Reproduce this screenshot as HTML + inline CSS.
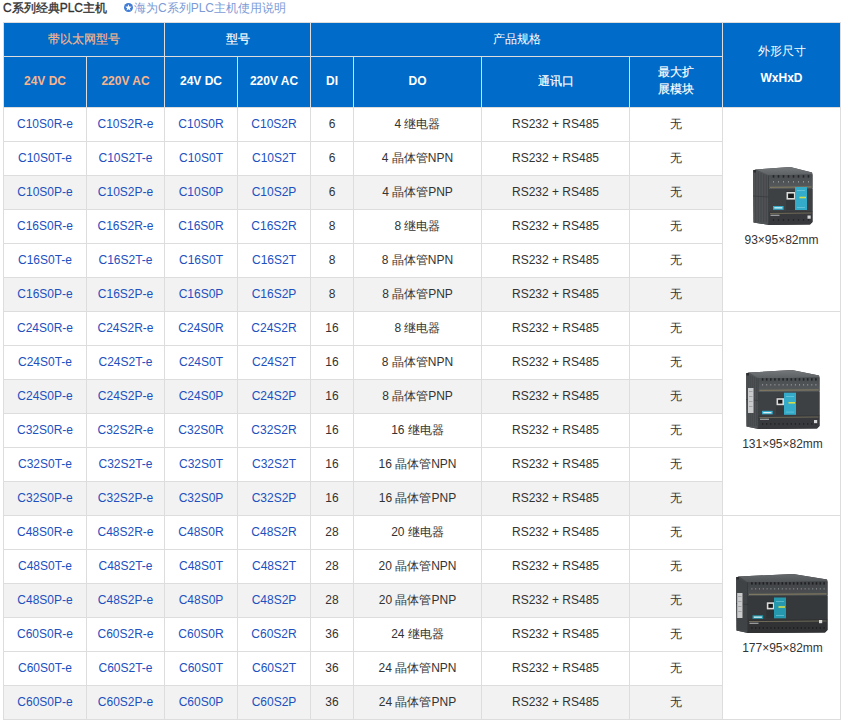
<!DOCTYPE html>
<html><head><meta charset="utf-8"><style>
html,body{margin:0;padding:0;background:#fff;}
body{width:845px;height:724px;position:relative;overflow:hidden;font-family:"Liberation Sans",sans-serif;font-size:12px;color:#333;}
.c{position:absolute;display:flex;align-items:center;justify-content:center;text-align:center;box-sizing:border-box;}
.hl{position:absolute;height:1px;background:#dddddd;}
.vl{position:absolute;width:1px;background:#dddddd;}
.bg{position:absolute;}
.b{font-weight:bold;}
.cb{font-weight:normal;-webkit-text-stroke:0.2px currentColor;}
.m{color:#2050c0;}
.t{color:#333;}
.or{color:#f6b58e;}
.w{color:#fff;}
</style></head><body>

<div style="position:absolute;left:3px;top:0px;height:16px;line-height:16px;font-size:12px;font-weight:normal;-webkit-text-stroke:0.35px #333;color:#333;white-space:nowrap">C系列经典PLC主机</div>
<svg style="position:absolute;left:124px;top:3px" width="9" height="9" viewBox="0 0 9 9"><circle cx="4.5" cy="4.5" r="4.5" fill="#3f7cd6"/><polygon points="4.50,1.30 5.35,3.53 7.73,3.65 5.88,5.15 6.50,7.45 4.50,6.15 2.50,7.45 3.12,5.15 1.27,3.65 3.65,3.53" fill="#fff"/></svg>
<div style="position:absolute;left:134px;top:0px;height:16px;line-height:16px;font-size:12px;color:#7c9bd6;white-space:nowrap">海为C系列PLC主机使用说明</div>
<div class="bg" style="left:3px;top:22px;width:838px;height:85px;background:#006bc8"></div>
<div class="bg" style="left:3px;top:175px;width:719px;height:34px;background:#f2f2f2"></div>
<div class="bg" style="left:3px;top:277px;width:719px;height:34px;background:#f2f2f2"></div>
<div class="bg" style="left:3px;top:379px;width:719px;height:34px;background:#f2f2f2"></div>
<div class="bg" style="left:3px;top:481px;width:719px;height:34px;background:#f2f2f2"></div>
<div class="bg" style="left:3px;top:583px;width:719px;height:34px;background:#f2f2f2"></div>
<div class="bg" style="left:3px;top:685px;width:719px;height:34px;background:#f2f2f2"></div>
<div class="c cb or" style="left:4px;top:23px;width:160px;height:33px">带以太网型号</div>
<div class="c cb w" style="left:165px;top:23px;width:145px;height:33px">型号</div>
<div class="c w" style="left:311px;top:23px;width:411px;height:33px">产品规格</div>
<div class="c w" style="left:723px;top:22px;width:117px;height:84px"><div style="line-height:26px">外形尺寸<br><b style="position:relative;top:1px">WxHxD</b></div></div>
<div class="c b or" style="left:4px;top:56px;width:82px;height:50px">24V DC</div>
<div class="c b or" style="left:87px;top:56px;width:77px;height:50px">220V AC</div>
<div class="c b w" style="left:165px;top:56px;width:72px;height:50px">24V DC</div>
<div class="c b w" style="left:238px;top:56px;width:72px;height:50px">220V AC</div>
<div class="c b w" style="left:311px;top:56px;width:42px;height:50px">DI</div>
<div class="c b w" style="left:354px;top:56px;width:127px;height:50px">DO</div>
<div class="c cb w" style="left:482px;top:56px;width:147px;height:50px">通讯口</div>
<div class="c cb w" style="left:630px;top:56px;width:92px;height:50px"><div style="line-height:17px">最大扩<br>展模块</div></div>
<div class="c m" style="left:4px;top:107px;width:82px;height:33px">C10S0R-e</div>
<div class="c m" style="left:87px;top:107px;width:77px;height:33px">C10S2R-e</div>
<div class="c m" style="left:165px;top:107px;width:72px;height:33px">C10S0R</div>
<div class="c m" style="left:238px;top:107px;width:72px;height:33px">C10S2R</div>
<div class="c t" style="left:311px;top:107px;width:42px;height:33px">6</div>
<div class="c t" style="left:354px;top:108px;width:127px;height:33px">4 继电器</div>
<div class="c t" style="left:482px;top:107px;width:147px;height:33px">RS232 + RS485</div>
<div class="c t" style="left:630px;top:108px;width:92px;height:33px">无</div>
<div class="c m" style="left:4px;top:141px;width:82px;height:33px">C10S0T-e</div>
<div class="c m" style="left:87px;top:141px;width:77px;height:33px">C10S2T-e</div>
<div class="c m" style="left:165px;top:141px;width:72px;height:33px">C10S0T</div>
<div class="c m" style="left:238px;top:141px;width:72px;height:33px">C10S2T</div>
<div class="c t" style="left:311px;top:141px;width:42px;height:33px">6</div>
<div class="c t" style="left:354px;top:142px;width:127px;height:33px">4 晶体管NPN</div>
<div class="c t" style="left:482px;top:141px;width:147px;height:33px">RS232 + RS485</div>
<div class="c t" style="left:630px;top:142px;width:92px;height:33px">无</div>
<div class="c m" style="left:4px;top:175px;width:82px;height:33px">C10S0P-e</div>
<div class="c m" style="left:87px;top:175px;width:77px;height:33px">C10S2P-e</div>
<div class="c m" style="left:165px;top:175px;width:72px;height:33px">C10S0P</div>
<div class="c m" style="left:238px;top:175px;width:72px;height:33px">C10S2P</div>
<div class="c t" style="left:311px;top:175px;width:42px;height:33px">6</div>
<div class="c t" style="left:354px;top:176px;width:127px;height:33px">4 晶体管PNP</div>
<div class="c t" style="left:482px;top:175px;width:147px;height:33px">RS232 + RS485</div>
<div class="c t" style="left:630px;top:176px;width:92px;height:33px">无</div>
<div class="c m" style="left:4px;top:209px;width:82px;height:33px">C16S0R-e</div>
<div class="c m" style="left:87px;top:209px;width:77px;height:33px">C16S2R-e</div>
<div class="c m" style="left:165px;top:209px;width:72px;height:33px">C16S0R</div>
<div class="c m" style="left:238px;top:209px;width:72px;height:33px">C16S2R</div>
<div class="c t" style="left:311px;top:209px;width:42px;height:33px">8</div>
<div class="c t" style="left:354px;top:210px;width:127px;height:33px">8 继电器</div>
<div class="c t" style="left:482px;top:209px;width:147px;height:33px">RS232 + RS485</div>
<div class="c t" style="left:630px;top:210px;width:92px;height:33px">无</div>
<div class="c m" style="left:4px;top:243px;width:82px;height:33px">C16S0T-e</div>
<div class="c m" style="left:87px;top:243px;width:77px;height:33px">C16S2T-e</div>
<div class="c m" style="left:165px;top:243px;width:72px;height:33px">C16S0T</div>
<div class="c m" style="left:238px;top:243px;width:72px;height:33px">C16S2T</div>
<div class="c t" style="left:311px;top:243px;width:42px;height:33px">8</div>
<div class="c t" style="left:354px;top:244px;width:127px;height:33px">8 晶体管NPN</div>
<div class="c t" style="left:482px;top:243px;width:147px;height:33px">RS232 + RS485</div>
<div class="c t" style="left:630px;top:244px;width:92px;height:33px">无</div>
<div class="c m" style="left:4px;top:277px;width:82px;height:33px">C16S0P-e</div>
<div class="c m" style="left:87px;top:277px;width:77px;height:33px">C16S2P-e</div>
<div class="c m" style="left:165px;top:277px;width:72px;height:33px">C16S0P</div>
<div class="c m" style="left:238px;top:277px;width:72px;height:33px">C16S2P</div>
<div class="c t" style="left:311px;top:277px;width:42px;height:33px">8</div>
<div class="c t" style="left:354px;top:278px;width:127px;height:33px">8 晶体管PNP</div>
<div class="c t" style="left:482px;top:277px;width:147px;height:33px">RS232 + RS485</div>
<div class="c t" style="left:630px;top:278px;width:92px;height:33px">无</div>
<div class="c m" style="left:4px;top:311px;width:82px;height:33px">C24S0R-e</div>
<div class="c m" style="left:87px;top:311px;width:77px;height:33px">C24S2R-e</div>
<div class="c m" style="left:165px;top:311px;width:72px;height:33px">C24S0R</div>
<div class="c m" style="left:238px;top:311px;width:72px;height:33px">C24S2R</div>
<div class="c t" style="left:311px;top:311px;width:42px;height:33px">16</div>
<div class="c t" style="left:354px;top:312px;width:127px;height:33px">8 继电器</div>
<div class="c t" style="left:482px;top:311px;width:147px;height:33px">RS232 + RS485</div>
<div class="c t" style="left:630px;top:312px;width:92px;height:33px">无</div>
<div class="c m" style="left:4px;top:345px;width:82px;height:33px">C24S0T-e</div>
<div class="c m" style="left:87px;top:345px;width:77px;height:33px">C24S2T-e</div>
<div class="c m" style="left:165px;top:345px;width:72px;height:33px">C24S0T</div>
<div class="c m" style="left:238px;top:345px;width:72px;height:33px">C24S2T</div>
<div class="c t" style="left:311px;top:345px;width:42px;height:33px">16</div>
<div class="c t" style="left:354px;top:346px;width:127px;height:33px">8 晶体管NPN</div>
<div class="c t" style="left:482px;top:345px;width:147px;height:33px">RS232 + RS485</div>
<div class="c t" style="left:630px;top:346px;width:92px;height:33px">无</div>
<div class="c m" style="left:4px;top:379px;width:82px;height:33px">C24S0P-e</div>
<div class="c m" style="left:87px;top:379px;width:77px;height:33px">C24S2P-e</div>
<div class="c m" style="left:165px;top:379px;width:72px;height:33px">C24S0P</div>
<div class="c m" style="left:238px;top:379px;width:72px;height:33px">C24S2P</div>
<div class="c t" style="left:311px;top:379px;width:42px;height:33px">16</div>
<div class="c t" style="left:354px;top:380px;width:127px;height:33px">8 晶体管PNP</div>
<div class="c t" style="left:482px;top:379px;width:147px;height:33px">RS232 + RS485</div>
<div class="c t" style="left:630px;top:380px;width:92px;height:33px">无</div>
<div class="c m" style="left:4px;top:413px;width:82px;height:33px">C32S0R-e</div>
<div class="c m" style="left:87px;top:413px;width:77px;height:33px">C32S2R-e</div>
<div class="c m" style="left:165px;top:413px;width:72px;height:33px">C32S0R</div>
<div class="c m" style="left:238px;top:413px;width:72px;height:33px">C32S2R</div>
<div class="c t" style="left:311px;top:413px;width:42px;height:33px">16</div>
<div class="c t" style="left:354px;top:414px;width:127px;height:33px">16 继电器</div>
<div class="c t" style="left:482px;top:413px;width:147px;height:33px">RS232 + RS485</div>
<div class="c t" style="left:630px;top:414px;width:92px;height:33px">无</div>
<div class="c m" style="left:4px;top:447px;width:82px;height:33px">C32S0T-e</div>
<div class="c m" style="left:87px;top:447px;width:77px;height:33px">C32S2T-e</div>
<div class="c m" style="left:165px;top:447px;width:72px;height:33px">C32S0T</div>
<div class="c m" style="left:238px;top:447px;width:72px;height:33px">C32S2T</div>
<div class="c t" style="left:311px;top:447px;width:42px;height:33px">16</div>
<div class="c t" style="left:354px;top:448px;width:127px;height:33px">16 晶体管NPN</div>
<div class="c t" style="left:482px;top:447px;width:147px;height:33px">RS232 + RS485</div>
<div class="c t" style="left:630px;top:448px;width:92px;height:33px">无</div>
<div class="c m" style="left:4px;top:481px;width:82px;height:33px">C32S0P-e</div>
<div class="c m" style="left:87px;top:481px;width:77px;height:33px">C32S2P-e</div>
<div class="c m" style="left:165px;top:481px;width:72px;height:33px">C32S0P</div>
<div class="c m" style="left:238px;top:481px;width:72px;height:33px">C32S2P</div>
<div class="c t" style="left:311px;top:481px;width:42px;height:33px">16</div>
<div class="c t" style="left:354px;top:482px;width:127px;height:33px">16 晶体管PNP</div>
<div class="c t" style="left:482px;top:481px;width:147px;height:33px">RS232 + RS485</div>
<div class="c t" style="left:630px;top:482px;width:92px;height:33px">无</div>
<div class="c m" style="left:4px;top:515px;width:82px;height:33px">C48S0R-e</div>
<div class="c m" style="left:87px;top:515px;width:77px;height:33px">C48S2R-e</div>
<div class="c m" style="left:165px;top:515px;width:72px;height:33px">C48S0R</div>
<div class="c m" style="left:238px;top:515px;width:72px;height:33px">C48S2R</div>
<div class="c t" style="left:311px;top:515px;width:42px;height:33px">28</div>
<div class="c t" style="left:354px;top:516px;width:127px;height:33px">20 继电器</div>
<div class="c t" style="left:482px;top:515px;width:147px;height:33px">RS232 + RS485</div>
<div class="c t" style="left:630px;top:516px;width:92px;height:33px">无</div>
<div class="c m" style="left:4px;top:549px;width:82px;height:33px">C48S0T-e</div>
<div class="c m" style="left:87px;top:549px;width:77px;height:33px">C48S2T-e</div>
<div class="c m" style="left:165px;top:549px;width:72px;height:33px">C48S0T</div>
<div class="c m" style="left:238px;top:549px;width:72px;height:33px">C48S2T</div>
<div class="c t" style="left:311px;top:549px;width:42px;height:33px">28</div>
<div class="c t" style="left:354px;top:550px;width:127px;height:33px">20 晶体管NPN</div>
<div class="c t" style="left:482px;top:549px;width:147px;height:33px">RS232 + RS485</div>
<div class="c t" style="left:630px;top:550px;width:92px;height:33px">无</div>
<div class="c m" style="left:4px;top:583px;width:82px;height:33px">C48S0P-e</div>
<div class="c m" style="left:87px;top:583px;width:77px;height:33px">C48S2P-e</div>
<div class="c m" style="left:165px;top:583px;width:72px;height:33px">C48S0P</div>
<div class="c m" style="left:238px;top:583px;width:72px;height:33px">C48S2P</div>
<div class="c t" style="left:311px;top:583px;width:42px;height:33px">28</div>
<div class="c t" style="left:354px;top:584px;width:127px;height:33px">20 晶体管PNP</div>
<div class="c t" style="left:482px;top:583px;width:147px;height:33px">RS232 + RS485</div>
<div class="c t" style="left:630px;top:584px;width:92px;height:33px">无</div>
<div class="c m" style="left:4px;top:617px;width:82px;height:33px">C60S0R-e</div>
<div class="c m" style="left:87px;top:617px;width:77px;height:33px">C60S2R-e</div>
<div class="c m" style="left:165px;top:617px;width:72px;height:33px">C60S0R</div>
<div class="c m" style="left:238px;top:617px;width:72px;height:33px">C60S2R</div>
<div class="c t" style="left:311px;top:617px;width:42px;height:33px">36</div>
<div class="c t" style="left:354px;top:618px;width:127px;height:33px">24 继电器</div>
<div class="c t" style="left:482px;top:617px;width:147px;height:33px">RS232 + RS485</div>
<div class="c t" style="left:630px;top:618px;width:92px;height:33px">无</div>
<div class="c m" style="left:4px;top:651px;width:82px;height:33px">C60S0T-e</div>
<div class="c m" style="left:87px;top:651px;width:77px;height:33px">C60S2T-e</div>
<div class="c m" style="left:165px;top:651px;width:72px;height:33px">C60S0T</div>
<div class="c m" style="left:238px;top:651px;width:72px;height:33px">C60S2T</div>
<div class="c t" style="left:311px;top:651px;width:42px;height:33px">36</div>
<div class="c t" style="left:354px;top:652px;width:127px;height:33px">24 晶体管NPN</div>
<div class="c t" style="left:482px;top:651px;width:147px;height:33px">RS232 + RS485</div>
<div class="c t" style="left:630px;top:652px;width:92px;height:33px">无</div>
<div class="c m" style="left:4px;top:685px;width:82px;height:33px">C60S0P-e</div>
<div class="c m" style="left:87px;top:685px;width:77px;height:33px">C60S2P-e</div>
<div class="c m" style="left:165px;top:685px;width:72px;height:33px">C60S0P</div>
<div class="c m" style="left:238px;top:685px;width:72px;height:33px">C60S2P</div>
<div class="c t" style="left:311px;top:685px;width:42px;height:33px">36</div>
<div class="c t" style="left:354px;top:686px;width:127px;height:33px">24 晶体管PNP</div>
<div class="c t" style="left:482px;top:685px;width:147px;height:33px">RS232 + RS485</div>
<div class="c t" style="left:630px;top:686px;width:92px;height:33px">无</div>
<svg style="position:absolute;left:753px;top:167px;overflow:visible" width="60" height="58" viewBox="0 0 60 58"><defs><filter id="bl1" x="-10%" y="-10%" width="120%" height="120%"><feGaussianBlur stdDeviation="0.8"/></filter><linearGradient id="gbl1" x1="0" y1="0" x2="0" y2="1"><stop offset="0" stop-color="#75787b"/><stop offset="1" stop-color="#5d6063"/></linearGradient><linearGradient id="ubl1" x1="0" y1="0" x2="0" y2="1"><stop offset="0" stop-color="#4a4d50"/><stop offset="1" stop-color="#575a5d"/></linearGradient></defs><g><path d="M0 3.5 L3 2.5 L37.2 0 L59 5.5 L59.5 8 L59.5 55 L57 57.5 L16 58 L0.5 55.5 Z" fill="#404346"/><path d="M0 3.5 L3 2.5 L16 8.0 L16 58 L0.5 55.5 Z" fill="#505356"/><line x1="2.7" y1="4.8" x2="2.7" y2="55" stroke="#3f4245" stroke-width="0.7"/><line x1="5.3" y1="5.6" x2="5.3" y2="55" stroke="#3f4245" stroke-width="0.7"/><line x1="8.0" y1="6.4" x2="8.0" y2="55" stroke="#3f4245" stroke-width="0.7"/><line x1="10.7" y1="7.2" x2="10.7" y2="55" stroke="#3f4245" stroke-width="0.7"/><line x1="13.3" y1="8.0" x2="13.3" y2="55" stroke="#3f4245" stroke-width="0.7"/><line x1="0" y1="29.0" x2="16" y2="30.0" stroke="#3a3c3f" stroke-width="0.8"/><line x1="15.7" y1="8.0" x2="15.7" y2="58" stroke="#35383b" stroke-width="0.8"/><rect x="0.5" y="3" width="2.5" height="2.5" fill="#2a2c2e"/><path d="M3 2.5 L37.2 0 L59 5.5 L59.5 7.5 L16 8.5 Z" fill="url(#gbl1)"/><path d="M16 8.5 L59.5 7.5 L59.5 21.5 L16 22.0 Z" fill="url(#ubl1)"/><rect x="19.7" y="8.2" width="1.6" height="2.4" fill="#222426"/><rect x="20.0" y="14.0" width="1.0" height="1.6" fill="#8d9093"/><rect x="24.7" y="8.2" width="1.6" height="2.4" fill="#222426"/><rect x="25.0" y="14.0" width="1.0" height="1.6" fill="#8d9093"/><rect x="29.7" y="8.2" width="1.6" height="2.4" fill="#222426"/><rect x="30.0" y="14.0" width="1.0" height="1.6" fill="#8d9093"/><rect x="34.7" y="8.2" width="1.6" height="2.4" fill="#222426"/><rect x="35.0" y="14.0" width="1.0" height="1.6" fill="#8d9093"/><rect x="39.7" y="8.2" width="1.6" height="2.4" fill="#222426"/><rect x="40.0" y="14.0" width="1.0" height="1.6" fill="#8d9093"/><rect x="44.7" y="8.2" width="1.6" height="2.4" fill="#222426"/><rect x="45.0" y="14.0" width="1.0" height="1.6" fill="#8d9093"/><rect x="49.7" y="8.2" width="1.6" height="2.4" fill="#222426"/><rect x="50.0" y="14.0" width="1.0" height="1.6" fill="#8d9093"/><rect x="54.7" y="8.2" width="1.6" height="2.4" fill="#222426"/><rect x="55.0" y="14.0" width="1.0" height="1.6" fill="#8d9093"/><path d="M17 19.8 L58.5 19.2 L58.5 20.4 L17 21.0 Z" fill="#7d775f"/><rect x="16" y="22.0" width="43.5" height="22.5" fill="#3e4144"/><rect x="33.0" y="24" width="9.5" height="19.0" fill="#36393c"/><rect x="33.5" y="25" width="9.0" height="7.600000000000001" fill="#dcdcda"/><rect x="35.1" y="26.6" width="5.8" height="4.4" fill="#1a1b1d"/><rect x="42" y="20" width="12" height="23" fill="#33abc9"/><rect x="46.5" y="29.7" width="6.5" height="1.6" fill="#d3dc4a"/><rect x="44" y="23.5" width="8.0" height="0.5" fill="#8fd6e6"/><rect x="44" y="40" width="8.0" height="0.5" fill="#8fd6e6"/><rect x="20" y="39" width="10.600000000000001" height="3.799999999999997" fill="#33abc9"/><rect x="21.3" y="40.2" width="8.0" height="1.3" fill="#d8f0f5"/><path d="M16 44.5 L59.5 44.0 L59.5 55 L57 57.5 L16 58 Z" fill="#37393c"/><path d="M17 46.0 L58.5 45.5 L58.5 46.5 L17 47.0 Z" fill="#6f6a57"/><rect x="17.5" y="47.7" width="9.0" height="1.2" fill="#a3a5a7"/><rect x="19.9" y="52.0" width="1.2" height="1.8" fill="#222426"/><rect x="24.9" y="52.0" width="1.2" height="1.8" fill="#222426"/><rect x="29.9" y="52.0" width="1.2" height="1.8" fill="#222426"/><rect x="34.9" y="52.0" width="1.2" height="1.8" fill="#222426"/><rect x="39.9" y="52.0" width="1.2" height="1.8" fill="#222426"/><rect x="44.9" y="52.0" width="1.2" height="1.8" fill="#222426"/><rect x="49.9" y="52.0" width="1.2" height="1.8" fill="#222426"/><rect x="54.9" y="52.0" width="1.2" height="1.8" fill="#222426"/><rect x="54.5" y="48.5" width="3.2" height="3.2" fill="#d8d8d8"/></g></svg>
<svg style="position:absolute;left:746px;top:370px;overflow:visible" width="74" height="59" viewBox="0 0 74 59"><defs><filter id="bl2" x="-10%" y="-10%" width="120%" height="120%"><feGaussianBlur stdDeviation="0.8"/></filter><linearGradient id="gbl2" x1="0" y1="0" x2="0" y2="1"><stop offset="0" stop-color="#75787b"/><stop offset="1" stop-color="#5d6063"/></linearGradient><linearGradient id="ubl2" x1="0" y1="0" x2="0" y2="1"><stop offset="0" stop-color="#4a4d50"/><stop offset="1" stop-color="#575a5d"/></linearGradient></defs><g><path d="M0 3.5 L3 2.5 L45.9 0 L73 5.5 L73.5 8 L73.5 56 L71 58.5 L12.5 59 L0.5 56.5 Z" fill="#404346"/><path d="M0 3.5 L3 2.5 L12.5 8.0 L12.5 59 L0.5 56.5 Z" fill="#505356"/><line x1="2.1" y1="4.8" x2="2.1" y2="56" stroke="#3f4245" stroke-width="0.7"/><line x1="4.2" y1="5.6" x2="4.2" y2="56" stroke="#3f4245" stroke-width="0.7"/><line x1="6.2" y1="6.4" x2="6.2" y2="56" stroke="#3f4245" stroke-width="0.7"/><line x1="8.3" y1="7.2" x2="8.3" y2="56" stroke="#3f4245" stroke-width="0.7"/><line x1="10.4" y1="8.0" x2="10.4" y2="56" stroke="#3f4245" stroke-width="0.7"/><line x1="0" y1="29.5" x2="12.5" y2="30.5" stroke="#3a3c3f" stroke-width="0.8"/><line x1="12.2" y1="8.0" x2="12.2" y2="59" stroke="#35383b" stroke-width="0.8"/><rect x="2" y="18" width="5.5" height="25" fill="#c9cbcd"/><rect x="3" y="21" width="3.5" height="0.8" fill="#9a9c9e"/><rect x="3" y="26" width="3.5" height="0.8" fill="#9a9c9e"/><rect x="3" y="31" width="3.5" height="0.8" fill="#9a9c9e"/><rect x="3" y="36" width="3.5" height="0.8" fill="#9a9c9e"/><rect x="0.5" y="3" width="2.5" height="2.5" fill="#2a2c2e"/><path d="M3 2.5 L45.9 0 L73 5.5 L73.5 7.5 L12.5 8.5 Z" fill="url(#gbl2)"/><path d="M12.5 8.5 L73.5 7.5 L73.5 21.5 L12.5 22.0 Z" fill="url(#ubl2)"/><rect x="15.8" y="8.2" width="1.6" height="2.4" fill="#222426"/><rect x="16.1" y="14.0" width="1.0" height="1.6" fill="#8d9093"/><rect x="19.9" y="8.2" width="1.6" height="2.4" fill="#222426"/><rect x="20.2" y="14.0" width="1.0" height="1.6" fill="#8d9093"/><rect x="24.0" y="8.2" width="1.6" height="2.4" fill="#222426"/><rect x="24.3" y="14.0" width="1.0" height="1.6" fill="#8d9093"/><rect x="28.1" y="8.2" width="1.6" height="2.4" fill="#222426"/><rect x="28.4" y="14.0" width="1.0" height="1.6" fill="#8d9093"/><rect x="32.2" y="8.2" width="1.6" height="2.4" fill="#222426"/><rect x="32.5" y="14.0" width="1.0" height="1.6" fill="#8d9093"/><rect x="36.3" y="8.2" width="1.6" height="2.4" fill="#222426"/><rect x="36.6" y="14.0" width="1.0" height="1.6" fill="#8d9093"/><rect x="40.4" y="8.2" width="1.6" height="2.4" fill="#222426"/><rect x="40.7" y="14.0" width="1.0" height="1.6" fill="#8d9093"/><rect x="44.5" y="8.2" width="1.6" height="2.4" fill="#222426"/><rect x="44.8" y="14.0" width="1.0" height="1.6" fill="#8d9093"/><rect x="48.6" y="8.2" width="1.6" height="2.4" fill="#222426"/><rect x="48.9" y="14.0" width="1.0" height="1.6" fill="#8d9093"/><rect x="52.7" y="8.2" width="1.6" height="2.4" fill="#222426"/><rect x="53.0" y="14.0" width="1.0" height="1.6" fill="#8d9093"/><rect x="56.8" y="8.2" width="1.6" height="2.4" fill="#222426"/><rect x="57.1" y="14.0" width="1.0" height="1.6" fill="#8d9093"/><rect x="60.9" y="8.2" width="1.6" height="2.4" fill="#222426"/><rect x="61.2" y="14.0" width="1.0" height="1.6" fill="#8d9093"/><rect x="65.0" y="8.2" width="1.6" height="2.4" fill="#222426"/><rect x="65.3" y="14.0" width="1.0" height="1.6" fill="#8d9093"/><rect x="69.1" y="8.2" width="1.6" height="2.4" fill="#222426"/><rect x="69.4" y="14.0" width="1.0" height="1.6" fill="#8d9093"/><path d="M13.5 19.8 L72.5 19.2 L72.5 20.4 L13.5 21.0 Z" fill="#7d775f"/><rect x="12.5" y="22.0" width="61.0" height="23.5" fill="#3e4144"/><rect x="30.0" y="27.2" width="8.0" height="17.6" fill="#36393c"/><rect x="30.5" y="28.2" width="7.5" height="7.0000000000000036" fill="#dcdcda"/><rect x="32.1" y="29.8" width="4.3" height="3.8" fill="#1a1b1d"/><rect x="38" y="22.7" width="12" height="22.099999999999998" fill="#33abc9"/><rect x="42.5" y="32.0" width="6.5" height="1.6" fill="#d3dc4a"/><rect x="40" y="26.2" width="8.0" height="0.5" fill="#8fd6e6"/><rect x="40" y="41.8" width="8.0" height="0.5" fill="#8fd6e6"/><rect x="16" y="40.8" width="10.7" height="3.5" fill="#33abc9"/><rect x="17.3" y="42.0" width="8.1" height="1.3" fill="#d8f0f5"/><path d="M12.5 45.5 L73.5 45.0 L73.5 56 L71 58.5 L12.5 59 Z" fill="#37393c"/><path d="M13.5 47.0 L72.5 46.5 L72.5 47.5 L13.5 48.0 Z" fill="#6f6a57"/><rect x="14.0" y="48.7" width="9.0" height="1.2" fill="#a3a5a7"/><rect x="16.0" y="53.0" width="1.2" height="1.8" fill="#222426"/><rect x="20.1" y="53.0" width="1.2" height="1.8" fill="#222426"/><rect x="24.2" y="53.0" width="1.2" height="1.8" fill="#222426"/><rect x="28.3" y="53.0" width="1.2" height="1.8" fill="#222426"/><rect x="32.4" y="53.0" width="1.2" height="1.8" fill="#222426"/><rect x="36.5" y="53.0" width="1.2" height="1.8" fill="#222426"/><rect x="40.6" y="53.0" width="1.2" height="1.8" fill="#222426"/><rect x="44.7" y="53.0" width="1.2" height="1.8" fill="#222426"/><rect x="48.8" y="53.0" width="1.2" height="1.8" fill="#222426"/><rect x="52.9" y="53.0" width="1.2" height="1.8" fill="#222426"/><rect x="57.0" y="53.0" width="1.2" height="1.8" fill="#222426"/><rect x="61.1" y="53.0" width="1.2" height="1.8" fill="#222426"/><rect x="65.2" y="53.0" width="1.2" height="1.8" fill="#222426"/><rect x="69.3" y="53.0" width="1.2" height="1.8" fill="#222426"/><rect x="68" y="50" width="3.2" height="3.2" fill="#d8d8d8"/></g></svg>
<svg style="position:absolute;left:736px;top:574px;overflow:visible" width="92" height="59" viewBox="0 0 92 59"><defs><filter id="bl3" x="-10%" y="-10%" width="120%" height="120%"><feGaussianBlur stdDeviation="0.8"/></filter><linearGradient id="gbl3" x1="0" y1="0" x2="0" y2="1"><stop offset="0" stop-color="#66696c"/><stop offset="1" stop-color="#515457"/></linearGradient><linearGradient id="ubl3" x1="0" y1="0" x2="0" y2="1"><stop offset="0" stop-color="#414346"/><stop offset="1" stop-color="#4c4f51"/></linearGradient></defs><g><path d="M0 3.5 L3 2.5 L57.0 0 L91 5.5 L91.5 8 L91.5 56 L89 58.5 L12 59 L0.5 56.5 Z" fill="#383a3d"/><path d="M0 3.5 L3 2.5 L12 8.0 L12 59 L0.5 56.5 Z" fill="#46494b"/><line x1="2.0" y1="4.8" x2="2.0" y2="56" stroke="#373a3c" stroke-width="0.7"/><line x1="4.0" y1="5.6" x2="4.0" y2="56" stroke="#373a3c" stroke-width="0.7"/><line x1="6.0" y1="6.4" x2="6.0" y2="56" stroke="#373a3c" stroke-width="0.7"/><line x1="8.0" y1="7.2" x2="8.0" y2="56" stroke="#373a3c" stroke-width="0.7"/><line x1="10.0" y1="8.0" x2="10.0" y2="56" stroke="#373a3c" stroke-width="0.7"/><line x1="0" y1="29.5" x2="12" y2="30.5" stroke="#333437" stroke-width="0.8"/><line x1="11.7" y1="8.0" x2="11.7" y2="59" stroke="#2e3133" stroke-width="0.8"/><rect x="1.2" y="19" width="5.3" height="25" fill="#c9cbcd"/><rect x="2.2" y="22" width="3.3" height="0.8" fill="#9a9c9e"/><rect x="2.2" y="27" width="3.3" height="0.8" fill="#9a9c9e"/><rect x="2.2" y="32" width="3.3" height="0.8" fill="#9a9c9e"/><rect x="2.2" y="37" width="3.3" height="0.8" fill="#9a9c9e"/><rect x="0.5" y="3" width="2.5" height="2.5" fill="#2a2c2e"/><path d="M3 2.5 L57.0 0 L91 5.5 L91.5 7.5 L12 8.5 Z" fill="url(#gbl3)"/><path d="M12 8.5 L91.5 7.5 L91.5 21.5 L12 22.0 Z" fill="url(#ubl3)"/><rect x="15.1" y="8.2" width="1.6" height="2.4" fill="#1d1f21"/><rect x="15.4" y="14.0" width="1.0" height="1.6" fill="#7c7e81"/><rect x="18.9" y="8.2" width="1.6" height="2.4" fill="#1d1f21"/><rect x="19.2" y="14.0" width="1.0" height="1.6" fill="#7c7e81"/><rect x="22.7" y="8.2" width="1.6" height="2.4" fill="#1d1f21"/><rect x="23.0" y="14.0" width="1.0" height="1.6" fill="#7c7e81"/><rect x="26.5" y="8.2" width="1.6" height="2.4" fill="#1d1f21"/><rect x="26.8" y="14.0" width="1.0" height="1.6" fill="#7c7e81"/><rect x="30.3" y="8.2" width="1.6" height="2.4" fill="#1d1f21"/><rect x="30.6" y="14.0" width="1.0" height="1.6" fill="#7c7e81"/><rect x="34.1" y="8.2" width="1.6" height="2.4" fill="#1d1f21"/><rect x="34.4" y="14.0" width="1.0" height="1.6" fill="#7c7e81"/><rect x="37.9" y="8.2" width="1.6" height="2.4" fill="#1d1f21"/><rect x="38.2" y="14.0" width="1.0" height="1.6" fill="#7c7e81"/><rect x="41.7" y="8.2" width="1.6" height="2.4" fill="#1d1f21"/><rect x="42.0" y="14.0" width="1.0" height="1.6" fill="#7c7e81"/><rect x="45.5" y="8.2" width="1.6" height="2.4" fill="#1d1f21"/><rect x="45.8" y="14.0" width="1.0" height="1.6" fill="#7c7e81"/><rect x="49.3" y="8.2" width="1.6" height="2.4" fill="#1d1f21"/><rect x="49.6" y="14.0" width="1.0" height="1.6" fill="#7c7e81"/><rect x="53.1" y="8.2" width="1.6" height="2.4" fill="#1d1f21"/><rect x="53.4" y="14.0" width="1.0" height="1.6" fill="#7c7e81"/><rect x="56.9" y="8.2" width="1.6" height="2.4" fill="#1d1f21"/><rect x="57.2" y="14.0" width="1.0" height="1.6" fill="#7c7e81"/><rect x="60.7" y="8.2" width="1.6" height="2.4" fill="#1d1f21"/><rect x="61.0" y="14.0" width="1.0" height="1.6" fill="#7c7e81"/><rect x="64.5" y="8.2" width="1.6" height="2.4" fill="#1d1f21"/><rect x="64.8" y="14.0" width="1.0" height="1.6" fill="#7c7e81"/><rect x="68.3" y="8.2" width="1.6" height="2.4" fill="#1d1f21"/><rect x="68.6" y="14.0" width="1.0" height="1.6" fill="#7c7e81"/><rect x="72.1" y="8.2" width="1.6" height="2.4" fill="#1d1f21"/><rect x="72.4" y="14.0" width="1.0" height="1.6" fill="#7c7e81"/><rect x="75.9" y="8.2" width="1.6" height="2.4" fill="#1d1f21"/><rect x="76.2" y="14.0" width="1.0" height="1.6" fill="#7c7e81"/><rect x="79.7" y="8.2" width="1.6" height="2.4" fill="#1d1f21"/><rect x="80.0" y="14.0" width="1.0" height="1.6" fill="#7c7e81"/><rect x="83.5" y="8.2" width="1.6" height="2.4" fill="#1d1f21"/><rect x="83.8" y="14.0" width="1.0" height="1.6" fill="#7c7e81"/><rect x="87.3" y="8.2" width="1.6" height="2.4" fill="#1d1f21"/><rect x="87.6" y="14.0" width="1.0" height="1.6" fill="#7c7e81"/><path d="M13 19.8 L90.5 19.2 L90.5 20.4 L13 21.0 Z" fill="#7d775f"/><rect x="12" y="22.0" width="79.5" height="23.5" fill="#36393b"/><rect x="30.3" y="27.3" width="8.2" height="17.0" fill="#2f3234"/><rect x="30.8" y="28.3" width="7.7" height="7.099999999999998" fill="#dcdcda"/><rect x="32.4" y="29.900000000000002" width="4.5" height="3.9" fill="#1a1b1d"/><rect x="38" y="23.5" width="12" height="20.799999999999997" fill="#2598ad"/><rect x="42.5" y="32.2" width="6.5" height="1.6" fill="#d3dc4a"/><rect x="40" y="27.0" width="8.0" height="0.5" fill="#8fd6e6"/><rect x="40" y="41.3" width="8.0" height="0.5" fill="#8fd6e6"/><rect x="16.5" y="41.3" width="10.7" height="3.5" fill="#2598ad"/><rect x="17.8" y="42.5" width="8.1" height="1.3" fill="#d8f0f5"/><path d="M12 45.5 L91.5 45.0 L91.5 56 L89 58.5 L12 59 Z" fill="#303234"/><path d="M13 47.0 L90.5 46.5 L90.5 47.5 L13 48.0 Z" fill="#6f6a57"/><rect x="13.5" y="48.7" width="9.0" height="1.2" fill="#a3a5a7"/><rect x="15.3" y="53.0" width="1.2" height="1.8" fill="#1d1f21"/><rect x="19.1" y="53.0" width="1.2" height="1.8" fill="#1d1f21"/><rect x="22.9" y="53.0" width="1.2" height="1.8" fill="#1d1f21"/><rect x="26.7" y="53.0" width="1.2" height="1.8" fill="#1d1f21"/><rect x="30.5" y="53.0" width="1.2" height="1.8" fill="#1d1f21"/><rect x="34.3" y="53.0" width="1.2" height="1.8" fill="#1d1f21"/><rect x="38.1" y="53.0" width="1.2" height="1.8" fill="#1d1f21"/><rect x="41.9" y="53.0" width="1.2" height="1.8" fill="#1d1f21"/><rect x="45.7" y="53.0" width="1.2" height="1.8" fill="#1d1f21"/><rect x="49.5" y="53.0" width="1.2" height="1.8" fill="#1d1f21"/><rect x="53.3" y="53.0" width="1.2" height="1.8" fill="#1d1f21"/><rect x="57.1" y="53.0" width="1.2" height="1.8" fill="#1d1f21"/><rect x="60.9" y="53.0" width="1.2" height="1.8" fill="#1d1f21"/><rect x="64.7" y="53.0" width="1.2" height="1.8" fill="#1d1f21"/><rect x="68.5" y="53.0" width="1.2" height="1.8" fill="#1d1f21"/><rect x="72.3" y="53.0" width="1.2" height="1.8" fill="#1d1f21"/><rect x="76.1" y="53.0" width="1.2" height="1.8" fill="#1d1f21"/><rect x="79.9" y="53.0" width="1.2" height="1.8" fill="#1d1f21"/><rect x="83.7" y="53.0" width="1.2" height="1.8" fill="#1d1f21"/><rect x="87.5" y="53.0" width="1.2" height="1.8" fill="#1d1f21"/><rect x="83" y="46" width="3.2" height="3.2" fill="#d8d8d8"/></g></svg>
<div class="t" style="position:absolute;left:723px;width:117px;top:233px;height:14px;line-height:14px;text-align:center">93×95×82mm</div>
<div class="t" style="position:absolute;left:724px;width:117px;top:437px;height:14px;line-height:14px;text-align:center">131×95×82mm</div>
<div class="t" style="position:absolute;left:724px;width:117px;top:641px;height:14px;line-height:14px;text-align:center">177×95×82mm</div>
<div class="hl" style="left:3px;top:22px;width:838px"></div>
<div class="hl" style="left:3px;top:56px;width:719px"></div>
<div class="hl" style="left:3px;top:107px;width:838px"></div>
<div class="hl" style="left:3px;top:141px;width:719px"></div>
<div class="hl" style="left:3px;top:175px;width:719px"></div>
<div class="hl" style="left:3px;top:209px;width:719px"></div>
<div class="hl" style="left:3px;top:243px;width:719px"></div>
<div class="hl" style="left:3px;top:277px;width:719px"></div>
<div class="hl" style="left:3px;top:311px;width:838px"></div>
<div class="hl" style="left:3px;top:345px;width:719px"></div>
<div class="hl" style="left:3px;top:379px;width:719px"></div>
<div class="hl" style="left:3px;top:413px;width:719px"></div>
<div class="hl" style="left:3px;top:447px;width:719px"></div>
<div class="hl" style="left:3px;top:481px;width:719px"></div>
<div class="hl" style="left:3px;top:515px;width:838px"></div>
<div class="hl" style="left:3px;top:549px;width:719px"></div>
<div class="hl" style="left:3px;top:583px;width:719px"></div>
<div class="hl" style="left:3px;top:617px;width:719px"></div>
<div class="hl" style="left:3px;top:651px;width:719px"></div>
<div class="hl" style="left:3px;top:685px;width:719px"></div>
<div class="hl" style="left:3px;top:719px;width:838px"></div>
<div class="vl" style="left:3px;top:22px;height:698px"></div>
<div class="vl" style="left:86px;top:56px;height:664px"></div>
<div class="vl" style="left:164px;top:22px;height:698px"></div>
<div class="vl" style="left:237px;top:56px;height:664px"></div>
<div class="vl" style="left:310px;top:22px;height:698px"></div>
<div class="vl" style="left:353px;top:56px;height:664px"></div>
<div class="vl" style="left:481px;top:56px;height:664px"></div>
<div class="vl" style="left:629px;top:56px;height:664px"></div>
<div class="vl" style="left:722px;top:22px;height:698px"></div>
<div class="vl" style="left:840px;top:22px;height:698px"></div>
</body></html>
